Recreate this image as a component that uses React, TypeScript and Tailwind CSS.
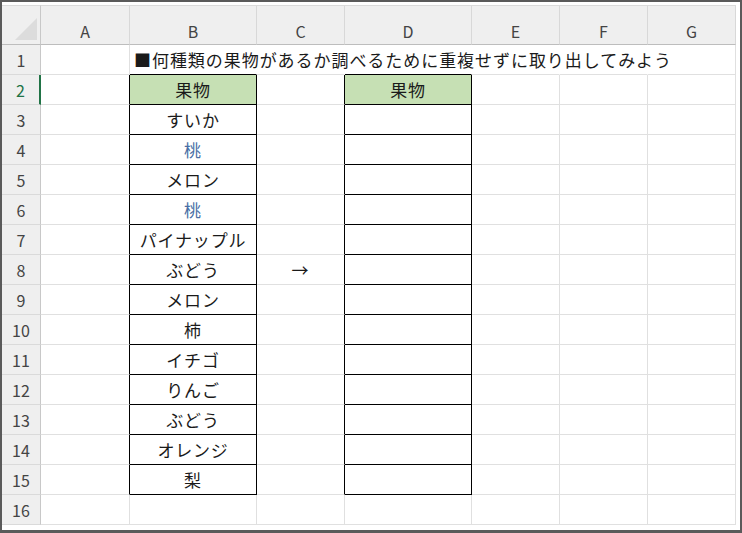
import React from "react";

const COLS = ["A", "B", "C", "D", "E", "F", "G"];
const BOXED = [1, 3]; // B, D

const FRUITS = [
  "すいか",
  "桃",
  "メロン",
  "桃",
  "パイナップル",
  "ぶどう",
  "メロン",
  "柿",
  "イチゴ",
  "りんご",
  "ぶどう",
  "オレンジ",
  "梨",
];

const JP = { fontFamily: '"Noto Sans CJK JP", "Noto Sans", sans-serif' };

function boxed(c: number, r: number) {
  return BOXED.includes(c) && r >= 2 && r <= 15;
}

function Cell({ r, c }: { r: number; c: number }) {
  const blackRight = boxed(c, r) || boxed(c + 1, r);
  const blackBottom = BOXED.includes(c) && r >= 1 && r <= 15;
  const hideRight = r === 1 && c >= 1 && c <= 5; // title overflows
  const isHead = r === 2 && BOXED.includes(c);

  let text = "";
  if (r === 2 && BOXED.includes(c)) text = "果物";
  if (c === 1 && r >= 3 && r <= 15) text = FRUITS[r - 3];
  if (c === 2 && r === 8) text = "→";

  return (
    <div
      className={`relative flex h-[30px] items-center justify-center border-r border-b text-[17px] tracking-[0.8px] text-[#1a1a1a] ${
        hideRight ? "border-r-white" : blackRight ? "border-r-black" : "border-r-[#e0e0e0]"
      } ${blackBottom ? "border-b-black" : "border-b-[#e0e0e0]"} ${
        isHead ? "bg-[#c6e0b4]" : "bg-white"
      } ${text === "桃" ? "text-[#4a6fa5]" : ""}`}
      style={JP}
    >
      {text}
      {r === 1 && c === 1 && (
        <span className="absolute top-0 left-[4px] z-10 flex h-full items-center tracking-[0.95px] whitespace-nowrap text-[#1a1a1a]">
          ■何種類の果物があるか調べるために重複せずに取り出してみよう
        </span>
      )}
    </div>
  );
}

export default function App() {
  const rows = Array.from({ length: 16 }, (_, i) => i + 1);
  return (
    <div className="h-[533px] w-[742px] overflow-hidden border-t-2 border-r-2 border-b-[3px] border-l-2 border-[#5a5a5a] bg-white pt-[3px]">
      <div
        className="grid grid-cols-[39px_89px_127px_88px_127px_88px_88px_88px]"
        style={JP}
      >
        {/* header row */}
        <div className="relative h-[40px] border-t border-r border-b border-t-[#dadada] border-r-[#c8c8c8] border-b-[#bdbdbd] bg-[#efefef]">
          <svg className="absolute right-[3px] bottom-[4px]" width="22" height="22" viewBox="0 0 22 22">
            <polygon points="22,0 22,22 0,22" fill="#dcdcdc" />
          </svg>
        </div>
        {COLS.map((l) => (
          <div
            key={l}
            className="flex h-[40px] items-center justify-center border-t border-r border-b border-t-[#dadada] border-r-[#d8d8d8] border-b-[#bdbdbd] bg-[#efefef] pt-[11px] text-[16px] text-[#444444]"
          >
            {l}
          </div>
        ))}

        {rows.map((r) => (
          <React.Fragment key={r}>
            <div
              className={`flex h-[30px] items-center justify-center border-b border-b-[#dadada] bg-[#efefef] text-[16px] ${
                r === 2
                  ? "border-r-2 border-r-[#217346] text-[#217346]"
                  : "border-r border-r-[#c8c8c8] text-[#444444]"
              }`}
            >
              {r}
            </div>
            {COLS.map((_, c) => (
              <Cell key={c} r={r} c={c} />
            ))}
          </React.Fragment>
        ))}
      </div>
    </div>
  );
}
